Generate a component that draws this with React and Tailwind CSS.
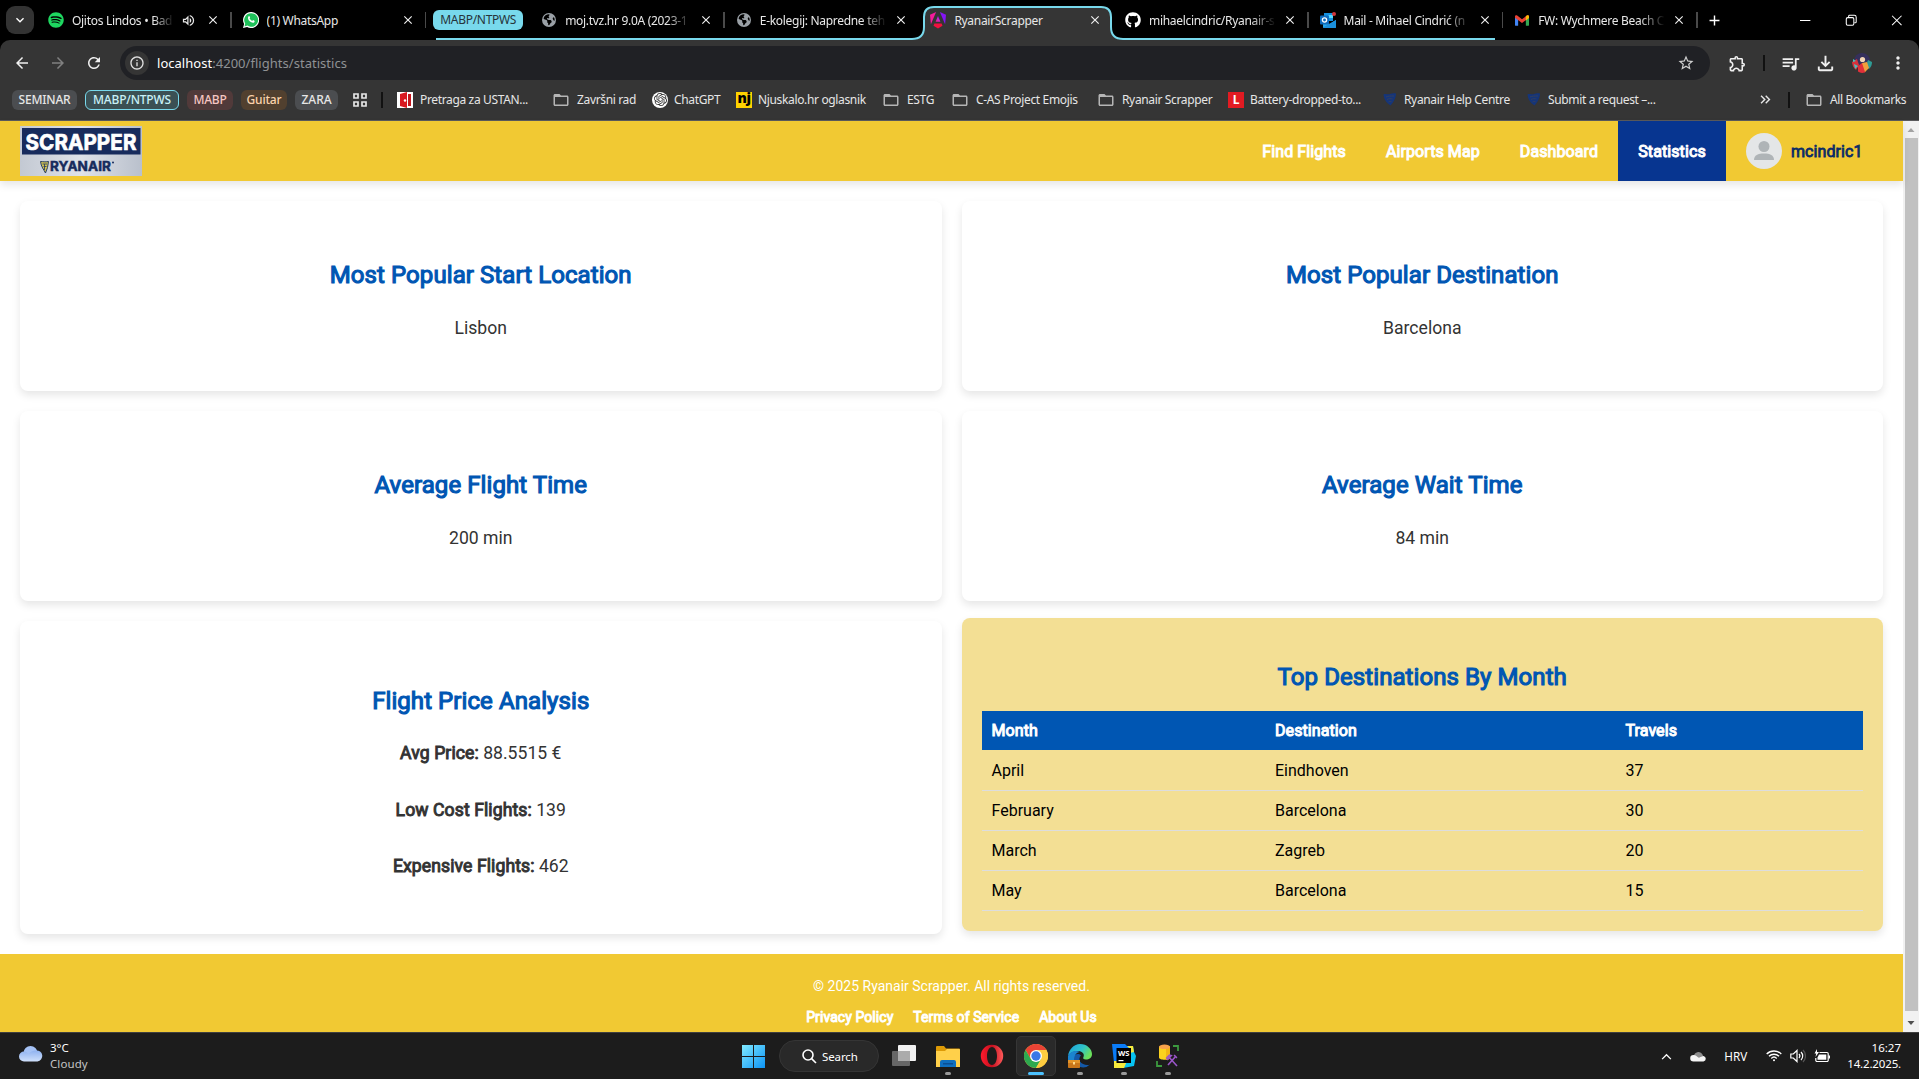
import React from "react";
import { FaSpotify, FaGithub, FaEarthAmericas } from "react-icons/fa6";
import { SiOpenai } from "react-icons/si";
import {
  MdArrowBack, MdArrowForward, MdRefresh, MdStarBorder, MdOutlineExtension, MdQueueMusic,
  MdOutlineFileDownload, MdMoreVert, MdFolderOpen, MdOutlineVolumeUp, MdClose, MdAdd,
  MdExpandMore, MdInfoOutline, MdKeyboardDoubleArrowRight,
} from "react-icons/md";

/* ---------- small drawings ---------- */

const SpotifyIcon = () => <FaSpotify className="size-4 text-[#1ed760]" />;
const GlobeIcon = () => <FaEarthAmericas className="size-[14px] text-[#9aa0a6]" />;

function WhatsAppIcon() {
  return (
    <svg viewBox="0 0 16 16" className="size-4">
      <path d="M8 0a8 8 0 0 0-6.9 12L0 16l4.1-1.1A8 8 0 1 0 8 0z" fill="#fff" />
      <path d="M8 1.2a6.8 6.8 0 0 0-5.8 10.3l-.7 2.9 3-.8A6.8 6.8 0 1 0 8 1.2z" fill="#1fc15a" />
      <path d="M5.6 4.2c.4-.3.8-.1 1 .3l.5 1.1c.1.3-.5.8-.5 1 .5 1 1.3 1.800 2.500 2.300.3 0 .8-.9 1-.8l1.300.7c.4.2.2 1.200-.3 1.600-1.200.9-3 .1-4.400-1.100C5.200 7.900 4.300 5.500 5.600 4.200z" fill="#fff" />
    </svg>
  );
}

function AngularIcon() {
  return (
    <svg viewBox="0 0 16 18" className="w-4 h-[18px]">
      <defs>
        <linearGradient id="ng" x1="0" y1="1" x2="1" y2="0">
          <stop offset="0" stopColor="#f61c7c" />
          <stop offset=".5" stopColor="#cc26d5" />
          <stop offset="1" stopColor="#7702ff" />
        </linearGradient>
      </defs>
      <path d="M9.900 1 16 3.800l-.9 9.400z" fill="#8514f5" />
      <path d="M6.100 1 0 3.800l.9 9.400z" fill="#f61c9c" />
      <path d="M12.500 14.800 8 17.400l-4.500-2.600.9-2.200h7.200z" fill="#f0113f" />
      <path d="M8 4.900 10.400 10.800H5.600z" fill="url(#ng)" />
    </svg>
  );
}

function OutlookIcon() {
  return (
    <svg viewBox="0 0 16 16" className="size-4">
      <path d="M4 1h9v8H4z" fill="#1490df" />
      <path d="M8.500 3h4.500v3H8.500z" fill="#50d9ff" />
      <path d="M3 8l6.500 4L16 8v7a1 1 0 0 1-1 1H4a1 1 0 0 1-1-1z" fill="#28a8ea" />
      <path d="M3 15.500 16 8v7a1 1 0 0 1-1 1H4z" fill="#1a8fdc" />
      <rect y="3.500" width="9" height="9" rx="1" fill="#0f6cbd" />
      <circle cx="4.500" cy="8" r="2.100" fill="none" stroke="#fff" strokeWidth="1.300" />
      <circle cx="14" cy="2" r="2" fill="#d13438" />
    </svg>
  );
}

function GmailIcon() {
  return (
    <svg viewBox="0 0 16 12" className="w-[14px] h-[11px]">
      <path d="M0 2v9a1 1 0 0 0 1 1h2.600V4.700z" fill="#4285f4" />
      <path d="M16 2v9a1 1 0 0 1-1 1h-2.600V4.700z" fill="#34a853" />
      <path d="M0 1.500C0 .2 1.500-.4 2.500.4L8 4.500 13.500.4C14.500-.4 16 .2 16 1.500v1.300L8 8.900 0 2.800z" fill="#ea4335" />
      <path d="M12.400 1.200l1.100-.8C14.500-.4 16 .2 16 1.500v1.700l-3.600 2.700z" fill="#fbbc04" />
    </svg>
  );
}

function ChatIcon() {
  return (
    <span className="flex size-4 items-center justify-center rounded-full bg-white">
      <SiOpenai className="size-[13px] text-[#333]" />
    </span>
  );
}

function HarpIcon() {
  return (
    <svg viewBox="0 0 16 16" className="size-4" fill="none" strokeWidth="1">
      <path d="M1.500 2.500C4 1 6 3 8 2s4-1 6-.5c0 3-1 7-5.500 12C4 10.500 2 7 1.500 2.500z" fill="#15357a" />
      <path d="M4 5c2-1 5-1 8-1M5 7.500c2-1 4-1 5.500-.5M6.500 10c1-.6 2-.6 3-.3" stroke="#35405c" />
    </svg>
  );
}

const Folder = () => <MdFolderOpen className="size-[18px] -mx-px text-[#b5b5b5]" />;

/* ---------- browser window ---------- */

function Tab({ icon, title, audio, fade, noSep }) {
  return (
    <div className="relative flex h-full w-[194.6px] shrink-0 items-center pl-[11px]">
      <span className="flex w-4 shrink-0 items-center justify-center">{icon}</span>
      <span
        className={
          "ml-2 shrink-0 overflow-hidden whitespace-nowrap pt-[2px] text-[12px] tracking-[-0.3px] text-[#e8e8e8] " +
          (audio ? "w-[102px]" : "w-[127px]") +
          (fade ? " [mask-image:linear-gradient(to_right,#000_80%,transparent)]" : "")
        }
      >
        {title}
      </span>
      {audio && <MdOutlineVolumeUp className="ml-[7px] size-[15px] shrink-0 text-[#e8e8e8]" />}
      <MdClose className={"size-[14px] shrink-0 text-[#f0f0f0] " + (audio ? "ml-[10px]" : "ml-[7px]")} />
      {!noSep && <span className="absolute right-0 top-3 h-4 w-[1.500px] bg-[#4a4a4a]" />}
    </div>
  );
}

function TabStrip() {
  return (
    <div className="relative h-10 bg-black">
      <svg className="absolute inset-0 h-10 w-[1919px]" viewBox="0 0 1919 40">
        <path
          d="M912 40c8 0 12-4 12-12V17c0-7 3-10 10-10h167c7 0 10 3 10 10v11c0 8 4 12 12 12z"
          fill="#353535"
        />
        <path
          d="M436 39h476c8 0 12-4 12-12V17c0-7 3-10 10-10h167c7 0 10 3 10 10v10c0 8 4 12 12 12h372"
          fill="none"
          stroke="#78d9ec"
          strokeWidth="2"
        />
      </svg>
      <div className="relative flex h-full items-center">
        <div className="w-[37px] shrink-0 pl-[6px]">
          <div className="flex size-7 items-center justify-center rounded-[9px] bg-[#333]">
            <MdExpandMore className="size-4 text-white" />
          </div>
        </div>
        <Tab icon={<SpotifyIcon />} title="Ojitos Lindos • Bad" audio fade />
        <Tab icon={<WhatsAppIcon />} title="(1) WhatsApp" />
        <div className="w-[104px] shrink-0 px-[7px]">
          <div className="flex h-5 items-center justify-center rounded-[6px] bg-[#78d9ec] text-[12px] tracking-[-0.3px] text-[#26343a]">
            MABP/NTPWS
          </div>
        </div>
        <Tab icon={<GlobeIcon />} title="moj.tvz.hr 9.0A (2023-1" fade />
        <Tab icon={<GlobeIcon />} title="E-kolegij: Napredne teh" noSep fade />
        <Tab icon={<AngularIcon />} title="RyanairScrapper" noSep />
        <Tab icon={<FaGithub className="size-4 text-white" />} title="mihaelcindric/Ryanair-s" fade />
        <Tab icon={<OutlookIcon />} title="Mail - Mihael Cindrić (n" fade />
        <Tab icon={<GmailIcon />} title="FW: Wychmere Beach C" fade />
        <MdAdd className="ml-2 size-[17px] text-white" />
        <svg viewBox="0 0 108 16" className="ml-auto mr-[17px] h-4 w-[102px]" fill="none" stroke="#fff" strokeWidth="1.100">
          <path d="M0 8.500h11M97.500 3.500l10 10M107.500 3.500l-10 10" />
          <rect x="49" y="5.500" width="8" height="8" rx="1.500" />
          <path d="M51.500 5V4a1 1 0 0 1 1-1h5a2 2 0 0 1 2 2v5a1 1 0 0 1-1 1h-1" />
        </svg>
      </div>
    </div>
  );
}

function Toolbar() {
  return (
    <div className="bg-black">
      <div className="flex h-[46px] items-center rounded-t-[10px] bg-[#353535] text-[#f0f0f0]">
        <MdArrowBack className="ml-[13px] size-[18px]" />
        <MdArrowForward className="ml-[18px] size-[18px] text-[#808080]" />
        <MdRefresh className="ml-[18px] size-[18px]" />
        <div className="ml-[17px] flex h-[34px] w-[1590px] items-center rounded-full bg-[#202125] pl-[5px]">
          <span className="flex size-6 items-center justify-center rounded-full bg-[#353535]">
            <MdInfoOutline className="size-4 text-[#e0e0e0]" />
          </span>
          <span className="ml-2 pt-px text-[13px] tracking-[0.03px] text-[#8f9194]">
            <span className="text-white">localhost</span>:4200/flights/statistics
          </span>
          <MdStarBorder className="ml-auto mr-[15px] size-[18px] text-[#d0d0d0]" />
        </div>
        <MdOutlineExtension className="ml-[18px] size-[19px]" />
        <span className="ml-[16px] h-4 w-[2px] bg-[#111]" />
        <MdQueueMusic className="ml-[15px] size-[21px]" />
        <MdOutlineFileDownload className="ml-[13px] size-[23px]" />
        <Avatar />
        <MdMoreVert className="ml-[16px] size-[20px]" />
      </div>
    </div>
  );
}

function Avatar() {
  return (
    <svg viewBox="0 0 20 20" className="ml-[15px] size-5">
      <circle cx="10" cy="8" r="8" fill="#35305c" />
      <path d="M0 9l5-3 2 6-3 5C1.500 15 .2 12 0 9z" fill="#d9323c" />
      <path d="M20 9l-4-2-2 5 3 4c2-2 3-4 3-7z" fill="#2f9c95" />
      <path d="M6 13l4-3 5 4-2 5.500c-3 .8-5 .5-7-.9z" fill="#e1303a" />
      <circle cx="10.500" cy="6.500" r="2.600" fill="#f3d7b8" />
      <path d="M10 10l5-1 2 6-4 4z" fill="#f0a03c" />
      <path d="M2 11l4 2-3 3z" fill="#4cc0c0" />
      <path d="M1 6l3 2-3 1z" fill="#4cc0c0" />
    </svg>
  );
}

function Group({ children, className }) {
  return (
    <span className={"flex h-5 items-center justify-center rounded-[6px] text-[12px] font-medium " + className}>
      {children}
    </span>
  );
}

function Bookmark({ icon, label, className }) {
  return (
    <span className={"flex shrink-0 items-center gap-2 whitespace-nowrap text-[12px] tracking-[-0.35px] " + className}>
      <span className="flex w-4 shrink-0 items-center justify-center">{icon}</span>
      <span className="pt-px">{label}</span>
    </span>
  );
}

function BookmarksBar() {
  return (
    <div className="flex h-[35px] items-center border-b border-[#5a5a5c] bg-[#353535] pb-[7px] pl-3 text-[#e6e6e6]">
      <Group className="w-[65px] bg-[#4b4d50] tracking-[-0.2px]">SEMINAR</Group>
      <Group className="ml-2 w-[94px] border border-[#78d9ec] bg-[#3b5054] tracking-[-0.2px] text-[#c9f0f7]">MABP/NTPWS</Group>
      <Group className="ml-2 w-[46px] bg-[#513a3a] tracking-[-0.2px] text-[#f6c6c2]">MABP</Group>
      <Group className="ml-2 w-[46px] bg-[#51402f] tracking-[-0.2px] text-[#fbd3ac]">Guitar</Group>
      <Group className="ml-2 w-[43px] bg-[#4b4d50]">ZARA</Group>
      <svg viewBox="0 0 14 14" className="ml-[15px] size-[14px]" fill="none" stroke="#e6e6e6" strokeWidth="1.700">
        <path d="M1 1h4v4H1zM9 1h4v4H9zM1 9h4v4H1zM9 9h4v4H9z" />
      </svg>
      <span className="ml-[14px] h-4 w-[2px] bg-[#111]" />
      <Bookmark
        className="ml-[14px] w-[156px] !gap-[7px]"
        label="Pretraga za USTAN..."
        icon={
          <svg viewBox="0 0 16 16" className="size-4">
            <path d="M0 0h16v16H0z" fill="#fff" />
            <path d="M3 2l7-2v16l-7-2z" fill="#d81820" />
            <path d="M11 2h3v12h-3z" fill="#c4161d" />
            <circle cx="8" cy="8.500" r="1.200" fill="#fff" />
          </svg>
        }
      />
      <Bookmark className="w-[99px]" icon={<Folder />} label="Završni rad" />
      <Bookmark className="w-[84px] !gap-[6px]" icon={<ChatIcon />} label="ChatGPT" />
      <Bookmark
        className="w-[147px] !gap-[6px]"
        label="Njuskalo.hr oglasnik"
        icon={
          <span className="flex h-4 w-4 items-center justify-center bg-[#ffd200] pb-[3px] text-[14px] leading-none font-black tracking-[-0.5px] text-black">
            nj
          </span>
        }
      />
      <Bookmark className="w-[69px]" icon={<Folder />} label="ESTG" />
      <Bookmark className="w-[146px]" icon={<Folder />} label="C-AS Project Emojis" />
      <Bookmark className="w-[130px]" icon={<Folder />} label="Ryanair Scrapper" />
      <Bookmark
        className="w-[154px] !gap-[6px]"
        label="Battery-dropped-to..."
        icon={
          <span className="flex size-4 items-center justify-center bg-[#e21b22] text-[12px] leading-none font-bold text-white">
            L
          </span>
        }
      />
      <Bookmark className="w-[144px] !gap-[6px]" icon={<HarpIcon />} label="Ryanair Help Centre" />
      <Bookmark className="w-[140px] !gap-[6px]" icon={<HarpIcon />} label="Submit a request –..." />
      <MdKeyboardDoubleArrowRight className="ml-auto size-[17px]" />
      <span className="ml-[14px] h-4 w-[2px] bg-[#111]" />
      <Bookmark className="ml-[16px] w-[113px]" icon={<Folder />} label="All Bookmarks" />
    </div>
  );
}

/* ---------- page ---------- */

function Logo() {
  return (
    <svg viewBox="0 0 122 50" className="h-[50px] w-[122px]">
      <defs>
        <linearGradient id="plate" x1="0" y1="0" x2="1" y2="0">
          <stop offset="0" stopColor="#c3c9d3" />
          <stop offset=".5" stopColor="#dfe2e8" />
          <stop offset="1" stopColor="#b9c0cc" />
        </linearGradient>
      </defs>
      <rect width="122" height="50" fill="url(#plate)" />
      <rect x="2" y="2" width="118.500" height="26.500" fill="#172b5c" />
      <text x="5.500" y="23.500" textLength="111" lengthAdjust="spacingAndGlyphs" fill="#fff" stroke="#fff" strokeWidth=".7" fontFamily="Inter" fontWeight="700" fontSize="22">
        SCRAPPER
      </text>
      <path d="M20.500 35.500c2.500 0 4.500.8 8 0l-1 6-2 5.500c-1.500-3-4.500-6.500-5-11.500z" fill="#cfc052" stroke="#2b4060" strokeWidth="1" />
      <path d="M22.500 38h4.500M23.500 40.500h3M24.500 38v6" stroke="#24395f" strokeWidth=".8" />
      <text x="30" y="45.400" textLength="61" lengthAdjust="spacingAndGlyphs" fill="#172b5c" stroke="#172b5c" strokeWidth=".5" fontFamily="Inter" fontWeight="700" fontSize="12.500">
        RYANAIR
      </text>
      <circle cx="93" cy="36.500" r="1" fill="#172b5c" />
    </svg>
  );
}

function Navbar() {
  return (
    <nav className="relative flex h-[60px] shrink-0 items-center bg-[#f1c933] pl-5 text-white tracking-[0.09px] shadow-[0_4px_8px_rgba(0,0,0,0.1)] [-webkit-text-stroke-width:1px]">
      <Logo />
      <div className="ml-auto flex h-full">
        <a className="flex items-center px-5 pt-[2px]">Find Flights</a>
        <a className="flex items-center px-5 pt-[2px]">Airports Map</a>
        <a className="flex items-center px-5 pt-[2px]">Dashboard</a>
        <a className="flex w-[108px] items-center justify-center bg-[#073590] pt-[2px]">Statistics</a>
      </div>
      <div className="flex w-[177px] items-center gap-[9px] pl-5 text-[#0b2c66]">
        <svg viewBox="0 0 36 36" className="size-9">
          <circle cx="18" cy="18" r="18" fill="#e4e6e7" />
          <circle cx="18" cy="13.500" r="5.500" fill="#afb4b7" />
          <path d="M8 27c0-5 4-6.500 10-6.500S28 22 28 27z" fill="#afb4b7" />
        </svg>
        <span className="pt-[2px] [-webkit-text-stroke-width:0.8px]">mcindric1</span>
      </div>
    </nav>
  );
}

function CardTitle({ children, className = "" }) {
  return (
    <h2 className={"text-center text-2xl leading-9 tracking-[0.08px] text-[#0056b3] [-webkit-text-stroke-width:1.15px] " + className}>
      {children}
    </h2>
  );
}

function Stat({ title, value }) {
  return (
    <section className="flex h-[190px] flex-col items-center rounded-lg bg-white pt-14 shadow-[0_4px_8px_rgba(0,0,0,0.1)]">
      <CardTitle>{title}</CardTitle>
      <p className="mt-[22px] text-[17.6px] leading-[26px] text-[#333]">{value}</p>
    </section>
  );
}

const prices = [
  ["Avg Price:", "88.5515 €"],
  ["Low Cost Flights:", "139"],
  ["Expensive Flights:", "462"],
];

const months = [
  ["April", "Eindhoven", "37"],
  ["February", "Barcelona", "30"],
  ["March", "Zagreb", "20"],
  ["May", "Barcelona", "15"],
];

function PriceCard() {
  return (
    <section className="flex h-[313px] flex-col items-center rounded-lg bg-white pt-[62px] shadow-[0_4px_8px_rgba(0,0,0,0.1)]">
      <CardTitle className="mb-[6px]">Flight Price Analysis</CardTitle>
      {prices.map(([label, value]) => (
        <p key={label} className="text-[17.6px] leading-[56.500px] text-[#333]">
          <strong className="font-normal tracking-[0.09px] [-webkit-text-stroke-width:0.95px]">{label}</strong> {value}
        </p>
      ))}
    </section>
  );
}

function MonthCard() {
  return (
    <section className="-mt-[3px] h-[313px] rounded-lg bg-[#f3df94] px-5 pt-[41px] shadow-[0_4px_8px_rgba(0,0,0,0.1)]">
      <CardTitle>Top Destinations By Month</CardTitle>
      <table className="mt-4 w-full table-fixed border-collapse text-left">
        <colgroup>
          <col className="w-[283.500px]" />
          <col className="w-[350.500px]" />
          <col />
        </colgroup>
        <thead>
          <tr className="h-[39px] bg-[#0056b3] tracking-[0.08px] text-white [-webkit-text-stroke-width:1px]">
            <th className="px-[10px] font-normal">Month</th>
            <th className="px-[10px] font-normal">Destination</th>
            <th className="px-[10px] font-normal">Travels</th>
          </tr>
        </thead>
        <tbody>
          {months.map((row) => (
            <tr key={row[0]} className="h-10 border-b border-[#ddd] text-black">
              {row.map((cell, i) => (
                <td key={i} className="px-[10px] pt-[2px]">{cell}</td>
              ))}
            </tr>
          ))}
        </tbody>
      </table>
    </section>
  );
}

function Footer() {
  return (
    <footer className="flex h-[78px] shrink-0 flex-col items-center bg-[#f1c933] pt-[22px] text-sm text-white">
      <p className="leading-5">© 2025 Ryanair Scrapper. All rights reserved.</p>
      <div className="mt-[11px] flex gap-[20px] leading-5 tracking-[0.07px] [-webkit-text-stroke-width:0.95px]">
        <a>Privacy Policy</a>
        <a>Terms of Service</a>
        <a>About Us</a>
      </div>
    </footer>
  );
}

function Scrollbar() {
  return (
    <div className="flex w-4 flex-col items-center bg-[#f1f1f1]">
      <svg viewBox="0 0 16 17" className="h-[17px] w-4"><path d="M4.500 11h7L8 7z" fill="#a3a3a3" /></svg>
      <div className="w-[13px] flex-1 bg-[#c1c1c1]" />
      <svg viewBox="0 0 16 21" className="h-[21px] w-4"><path d="M4.500 10h7L8 14z" fill="#505050" /></svg>
    </div>
  );
}

/* ---------- taskbar ---------- */

function TaskItem({ children, open, focused }) {
  return (
    <div
      className={
        "relative mx-[2px] flex size-10 items-center justify-center rounded-[5px] " +
        (focused ? "border border-[#363636] bg-[#2a2a2a]" : "")
      }
    >
      {children}
      {open && <span className="absolute bottom-px h-[3px] w-[6px] rounded-full bg-[#9a9a9a]" />}
      {focused && <span className="absolute bottom-0 h-[3px] w-4 rounded-full bg-[#4cc2ff]" />}
    </div>
  );
}

function Taskbar() {
  return (
    <div className="relative flex h-[47px] items-center border-t border-[#3f3f3f] bg-[#1c1c1c] text-[11.500px] text-white">
      <svg viewBox="0 0 24 16" className="mb-1 ml-[19px] h-4 w-6">
        <defs>
          <linearGradient id="cloud" x1="0" y1="0" x2="0" y2="1">
            <stop offset="0" stopColor="#8fb2f0" />
            <stop offset="1" stopColor="#cfe0fb" />
          </linearGradient>
        </defs>
        <circle cx="11.500" cy="7" r="7" fill="#a5c2f5" />
        <path d="M5 15.500a5 5 0 0 1 0-10c2 0 3 .8 4.500 2.500C12 5 14 4.500 17 4.500a5.500 5.500 0 0 1 1.500 11z" fill="url(#cloud)" />
      </svg>
      <div className="ml-[7px] leading-4">
        <div>3°C</div>
        <div className="tracking-[0.1px] text-[#c4c4c4]">Cloudy</div>
      </div>

      <div className="absolute top-[3px] left-[732px] flex items-center">
        <div className="flex w-[43px] justify-center">
          <svg viewBox="0 0 23 23" className="size-[23px]">
            <defs>
              <linearGradient id="win" x1="0" y1="0" x2="1" y2="1">
                <stop offset="0" stopColor="#80eaff" />
                <stop offset="1" stopColor="#0c93f5" />
              </linearGradient>
            </defs>
            <path d="M0 0h11v11H0zM12 0h11v11H12zM0 12h11v11H0zM12 12h11v11H12z" fill="url(#win)" />
          </svg>
        </div>
        <div className="ml-1 flex h-8 w-[100px] items-center rounded-full border border-[#353535] bg-[#292929] pl-[22px]">
          <svg viewBox="0 0 15 15" className="size-[15px]" fill="none" stroke="#fff" strokeWidth="1.600">
            <circle cx="6" cy="6" r="5" />
            <path d="M9.600 9.600 14 14" />
          </svg>
          <span className="ml-[5px] pt-px text-[11.500px] tracking-[-0.1px]">Search</span>
        </div>
        <div className="ml-[3px] flex">
          <TaskItem>
            <svg viewBox="0 0 24 24" className="size-6">
              <rect x="0" y="7" width="18" height="15" rx="1" fill="#666" />
              <rect x="6" y="1" width="18" height="16" rx="1" fill="#f2f2f2" />
              <rect x="6" y="7" width="12" height="10" fill="#ababab" />
            </svg>
          </TaskItem>
          <TaskItem open>
            <svg viewBox="0 0 24 24" className="size-6">
              <path d="M0 3a1 1 0 0 1 1-1h7l2 2.500H23a1 1 0 0 1 1 1V10H0z" fill="#dd9a06" />
              <path d="M0 7h9l2-2h12a1 1 0 0 1 1 1v17H0z" fill="#ffd04a" />
              <path d="M4 23v-5a2 2 0 0 1 2-2h12a2 2 0 0 1 2 2v5z" fill="#0f6fc0" />
              <path d="M7 19h10v1.500H7z" fill="#0a4f95" />
            </svg>
          </TaskItem>
          <TaskItem>
            <svg viewBox="0 0 24 24" className="size-6">
              <defs>
                <linearGradient id="op" x1="0" y1="0" x2="1" y2="0">
                  <stop offset="0" stopColor="#ff1b2d" />
                  <stop offset=".5" stopColor="#c4101f" />
                  <stop offset="1" stopColor="#ff5a5a" />
                </linearGradient>
              </defs>
              <path fillRule="evenodd" d="M12 .8a11.200 11.200 0 1 0 0 22.400A11.200 11.200 0 0 0 12 .8zm0 2.200c3 0 5 4 5 9s-2 9-5 9-5-4-5-9 2-9 5-9z" fill="url(#op)" />
            </svg>
          </TaskItem>
          <TaskItem focused>
            <svg viewBox="0 0 24 24" className="size-6">
              <circle cx="12" cy="12" r="12" fill="#ffcd40" />
              <path d="M12 6H22.400A12 12 0 0 0 1.600 6L6.800 15z" fill="#ea4335" />
              <path d="M1.600 6a12 12 0 0 0 10.400 18l5.200-9L12 17 6.800 15z" fill="#2da94f" />
              <path d="M12 6h10.400A12 12 0 0 1 12 24l5.200-9z" fill="#ffcd40" />
              <circle cx="12" cy="12" r="6" fill="#fff" />
              <circle cx="12" cy="12" r="4.700" fill="#3b78e7" />
            </svg>
          </TaskItem>
          <TaskItem open>
            <svg viewBox="0 0 24 24" className="size-6">
              <defs>
                <linearGradient id="edge" x1="0" y1="0" x2="1" y2=".5">
                  <stop offset="0" stopColor="#1c9ede" />
                  <stop offset=".6" stopColor="#2fc3c8" />
                  <stop offset="1" stopColor="#6be05a" />
                </linearGradient>
              </defs>
              <path d="M5 14a10 10 0 0 0 17 6.500c-3 1.500-8 0-10-3-1.500-3 0-5 1-6-3-3-7-1-8 2.500z" fill="#1358a8" />
              <path d="M0 12C1 5 6 0 12 0c7 0 12 5 12 10 0 4-3 5.500-6 5.500-2.500 0-3.500-1-2.500-2.500C17 9 13 6.500 9 7c-5 .5-8 3-9 5z" fill="url(#edge)" />
              <path d="M0 12c2-5 8-6 12-4-4 0-6 4-6 8H0z" fill="#1b84cf" />
              <rect x="0" y="16" width="12" height="8" rx=".8" fill="#c9761a" />
              <path d="M0 16h12v3H0z" fill="#e39328" />
              <rect x="5" y="18" width="2" height="2.500" fill="#ffd98a" />
            </svg>
          </TaskItem>
          <TaskItem open>
            <svg viewBox="0 0 24 24" className="size-6">
              <path d="M13 2h8l1 6 2 4-2 10-11 2z" fill="#07c3f2" />
              <path d="M14 2h7l1 6-4 1z" fill="#f7ea3c" />
              <path d="M0 0h13l5 5-4 14H2z" fill="#0a7cf7" />
              <path d="M2 17h13l-3 7H2z" fill="#f7ea3c" />
              <rect x="4.500" y="4" width="14.500" height="15" fill="#000" />
              <text x="6" y="12" fontSize="7" fontWeight="700" fill="#fff" fontFamily="Open Sans" textLength="11.500" lengthAdjust="spacingAndGlyphs">WS</text>
              <path d="M6.500 16h5v1.200h-5z" fill="#fff" />
            </svg>
          </TaskItem>
          <TaskItem open>
            <svg viewBox="0 0 24 24" className="size-6" fill="none">
              <path d="M3 2.500v11C3 16.500 14 16.500 14 13.500v-11z" fill="#fbd21e" />
              <path d="M10 3v13c2.500-.3 4-1 4-2.500v-11z" fill="#f3b514" />
              <ellipse cx="8.500" cy="2.800" rx="5.500" ry="2.300" fill="#f8a24b" />
              <path d="M17 2h5v5M1 17v5h5" stroke="#3c9a3f" strokeWidth="1.800" />
              <path d="M12 21l8-9M12 12l9 10" stroke="#9a55c8" strokeWidth="1.600" />
              <path d="M10.500 14l3-3 2 .5-4 4zM18 11l3 3" stroke="#9a55c8" strokeWidth="1.300" />
            </svg>
          </TaskItem>
        </div>
      </div>

      <div className="ml-auto flex items-center pr-[18px] pt-px">
        <svg viewBox="0 0 12 8" className="h-[7px] w-[11px]" fill="none" stroke="#fff" strokeWidth="1.500">
          <path d="M1 7l5-5 5 5" />
        </svg>
        <svg viewBox="0 0 16 11" className="ml-[18px] h-[11px] w-4">
          <path d="M4 6a4.500 4.500 0 0 1 8.500-2.500L14 7z" fill="#8d8d8d" />
          <path d="M3.500 10.500a3.300 3.300 0 0 1 0-6.600C6 3.900 7 6 9 6.500l4.500-1.500a2.800 2.800 0 0 1 0 5.500z" fill="#f4f4f4" />
        </svg>
        <span className="ml-[18px] text-[11.700px]">HRV</span>
        <svg viewBox="0 0 16 13" className="mb-[2px] ml-[19px] h-[13px] w-4" fill="none" stroke="#fff" strokeWidth="1.400">
          <path d="M.7 5a10.300 10.300 0 0 1 14.600 0M3 7.300a7 7 0 0 1 10 0M5.300 9.400a3.900 3.900 0 0 1 5.400 0" />
          <circle cx="8" cy="11.300" r="1" fill="#fff" stroke="none" />
        </svg>
        <svg viewBox="0 0 16 14" className="mb-px ml-2 h-[14px] w-4" fill="none" stroke="#fff" strokeWidth="1.200">
          <path d="M.8 5h2.500L7 1.500v11L3.300 9H.8zM9 5a3 3 0 0 1 0 4M11 3a5.600 5.600 0 0 1 0 8" />
          <path d="M13 1a8.500 8.500 0 0 1 0 12" stroke="#555" />
        </svg>
        <svg viewBox="0 0 16 14" className="mb-[2px] ml-2 h-[14px] w-4" fill="none" stroke="#fff" strokeWidth="1.200">
          <path d="M5.500 3.500H13a1.200 1.200 0 0 1 1.200 1.200v6.600a1.200 1.200 0 0 1-1.200 1.200H3a1.200 1.200 0 0 1-1.200-1.200V9M15.500 6.500v3" />
          <path d="M5 5.500h7.300v5.200H3.500V8.500z" fill="#fff" stroke="none" />
          <path d="M3 0 .5 4.500H2.200L1.500 8 5 3H3z" fill="#fff" stroke="none" />
        </svg>
        <div className="mb-[2px] ml-[17px] text-right leading-4">
          <div>16:27</div>
          <div className="tracking-[-0.15px]">14.2.2025.</div>
        </div>
      </div>
    </div>
  );
}

export default function App() {
  return (
    <div className="flex h-[1079px] w-[1919px] flex-col overflow-hidden bg-white font-['Noto_Sans',sans-serif]">
      <TabStrip />
      <Toolbar />
      <BookmarksBar />
      <div className="flex h-[911px] font-[Roboto,sans-serif] text-base">
        <div className="flex w-[1903px] flex-col">
          <Navbar />
          <main className="grid h-[773px] grid-cols-2 content-start gap-5 p-5">
            <Stat title="Most Popular Start Location" value="Lisbon" />
            <Stat title="Most Popular Destination" value="Barcelona" />
            <Stat title="Average Flight Time" value="200 min" />
            <Stat title="Average Wait Time" value="84 min" />
            <PriceCard />
            <MonthCard />
          </main>
          <Footer />
        </div>
        <Scrollbar />
      </div>
      <Taskbar />
    </div>
  );
}
